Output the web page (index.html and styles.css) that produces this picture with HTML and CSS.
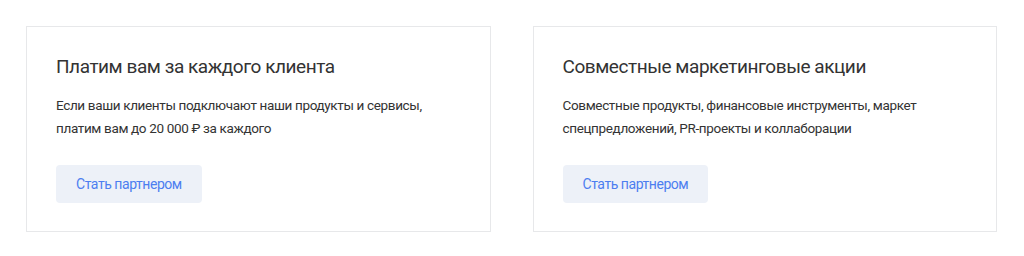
FILE: index.html
```html
<!DOCTYPE html>
<html lang="ru">
<head>
    <meta charset="UTF-8">
    <meta name="viewport" content="width=device-width, initial-scale=1.0">
    <title>Партнерам</title>
    <link rel="stylesheet" href="styles.css">
</head>
<body>

    <div class="cards">
        <div class="card">
            <h3 class="card-title">Платим вам за каждого клиента</h3>
            <p class="card-text">Если ваши клиенты подключают наши продукты и сервисы,<br>платим вам до 20&nbsp;000&nbsp;₽ за каждого</p>
            <a href="#" class="card-button">Стать партнером</a>
        </div>

        <div class="card">
            <h3 class="card-title">Совместные маркетинговые акции</h3>
            <p class="card-text">Совместные продукты, финансовые инструменты, маркет<br>спецпредложений, PR-проекты и коллаборации</p>
            <a href="#" class="card-button">Стать партнером</a>
        </div>
    </div>

</body>
</html>
```

FILE: styles.css
```css
body {
    font-family: Roboto, "Noto Sans", sans-serif;
    margin: 0;
    background-color: #fff;
    color: #333;
}

.cards {
    display: flex;
    gap: 42px;
    padding: 26px 27px 0 26px;
}

.card {
    flex: 1;
    border: 1px solid #e7e8ea;
    padding: 26px 29px 28px;
    display: flex;
    flex-direction: column;
    align-items: flex-start;
}

.card-title {
    margin: 0;
    font-size: 19px;
    font-weight: 400;
    line-height: 28px;
    letter-spacing: -0.45px;
    color: #333;
}

.card-text {
    margin: 13px 0 0;
    font-size: 13.5px;
    line-height: 23px;
    letter-spacing: -0.35px;
    color: #333;
}

.card-button {
    display: inline-block;
    margin-top: 25px;
    padding: 0 20px;
    height: 38px;
    line-height: 38px;
    background-color: #edf1f8;
    border-radius: 4px;
    color: #4c7ef0;
    font-size: 14px;
    letter-spacing: -0.45px;
    text-decoration: none;
}
```
